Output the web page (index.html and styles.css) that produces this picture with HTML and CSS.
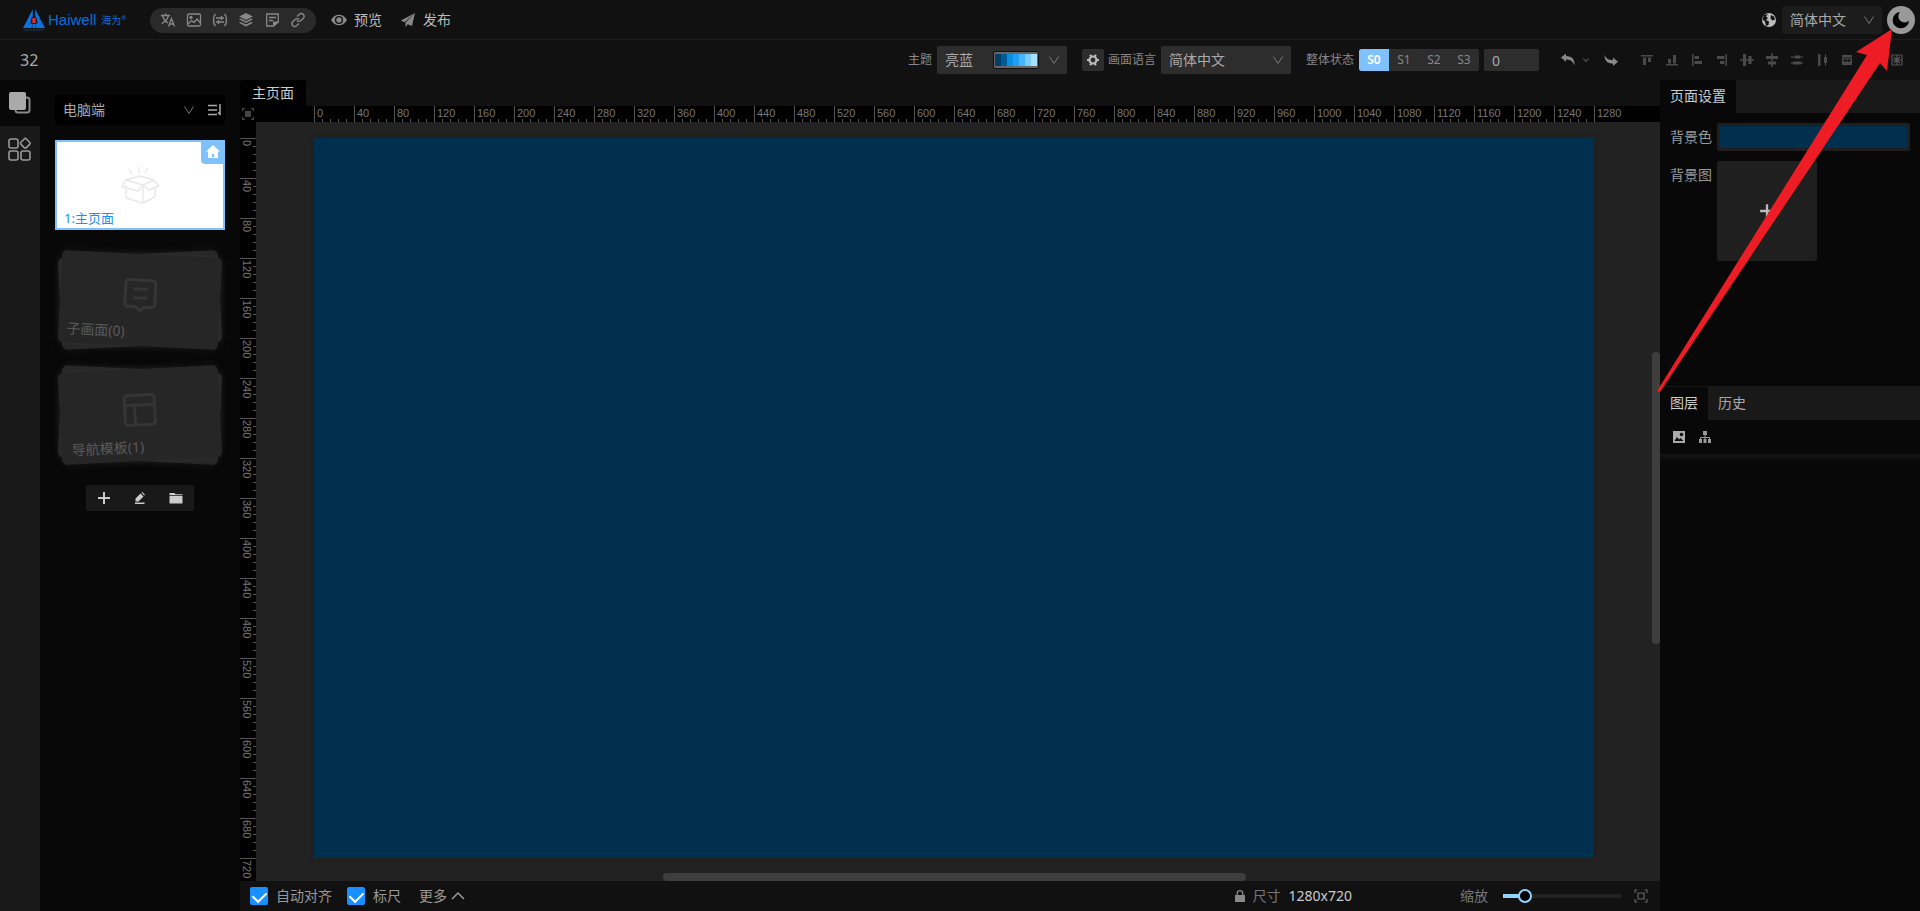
FILE: index.html
```html
<!DOCTYPE html>
<html lang="zh-CN">
<head>
<meta charset="utf-8">
<title>Haiwell 画面编辑器</title>
<link rel="stylesheet" href="styles.css">
</head>
<body>
<svg class="defs" aria-hidden="true">
  <symbol id="chevron" viewBox="0 0 12 12"><path d="M1.500 2.500 6 9.500 10.500 2.500" fill="none" stroke="currentColor"/></symbol>
  <symbol id="plus" viewBox="0 0 14 14"><path d="M7 1v12M1 7h12" stroke="currentColor" stroke-width="2"/></symbol>
</svg>
<div class="app">
  <header class="topbar">
    <a class="logo" href="#" aria-label="Haiwell">
      <svg width="22" height="24" viewBox="0 0 22 24"><path d="M9.800 1 0 20h8.500l1.300-4.500H7.500l1-5.500 1.300-1.500zM12.200 1 22 20h-8.500l-1.300-4.500h2.300l-1-5.500-1.300-1.500zM9 20l1-4h2l1 4z" fill="#0a72de"/><path d="M9.300 10h3.400v5H9.300z" fill="#e02a2f"/><path d="M1 22h20" stroke="#0a6ed8" stroke-width="2" opacity=".2"/></svg>
      <span class="logo-name">Haiwell</span><span class="logo-cn">海为<sup>®</sup></span>
    </a>
    <nav class="pill">
      <button aria-label="翻译"><svg class="i16" viewBox="0 0 16 16"><path d="M1 3.500h9M5.500 1.500v2M2.500 3.500c1 4 3 6 5.500 7.500M8.500 3.500C7.500 7.500 5 10 1.500 11.500M8.500 14.500l3-8 3 8M9.500 12h4" fill="none" stroke="currentColor" stroke-width="1.300"/></svg></button>
      <button aria-label="图片"><svg class="i16" viewBox="0 0 16 16" fill="none" stroke="currentColor" stroke-width="1.300"><rect x="1.500" y="2" width="13" height="12" rx="1.500"/><path d="m2 12 3.500-3.500 2.500 2L11 7l3.500 4"/><circle cx="5" cy="5.500" r="1"/></svg></button>
      <button aria-label="变量"><svg class="i16" viewBox="0 0 16 16" fill="none" stroke="currentColor" stroke-width="1.400"><path d="M3.500 2C1 4 1 12 3.500 14M12.500 2C15 4 15 12 12.500 14M4 6h8M4 10h8M9.500 4v4M6.500 8v4"/></svg></button>
      <button aria-label="图层"><svg class="i16" viewBox="0 0 16 16" fill="currentColor"><path d="m8 1 7 3.500L8 8 1 4.500zM1 7.300 2.800 6.500 8 9.200l5.200-2.700L15 7.300 8 11zM1 10.800 2.800 10 8 12.600l5.200-2.600 1.800.8L8 14.500z"/></svg></button>
      <button aria-label="便签"><svg class="i16" viewBox="0 0 16 16"><path d="M9.500 14H2.700V2h11.600v8zM5 5.500h7M5 8.500h4" fill="none" stroke="currentColor" stroke-width="1.300"/><path d="M9 15V9.500h6z" fill="currentColor"/></svg></button>
      <button aria-label="链接"><svg class="i16" viewBox="0 0 16 16" fill="none" stroke="currentColor" stroke-width="1.400"><path d="m7 4.500 2.500-2.300c2.500-2 6 1 4 3.800L11 8.500c-1.500 1.400-3.300 1-4.200 0M9 11.500l-2.500 2.300c-2.500 2-6-1-4-3.800L5 7.500c1.500-1.400 3.300-1 4.200 0"/></svg></button>
    </nav>
    <button class="action"><svg class="i16" viewBox="0 0 16 16"><path d="M0 8c3.500-7 12.500-7 16 0-3.500 7-12.500 7-16 0z" fill="#888"/><circle cx="8" cy="8" r="3.400" fill="none" stroke="#111" stroke-width="1.400"/></svg>预览</button>
    <button class="action publish"><svg class="i16" viewBox="0 0 16 16" fill="#888"><path d="M15 1 1 8.500l3.500 1.800zM15 1 5.500 10.500V15l2.300-2.800 4.200 1.800z"/></svg>发布</button>
    <div class="top-right">
      <svg class="i16" viewBox="0 0 16 16"><circle cx="8" cy="8" r="7" fill="#bbb"/><path d="M7 2 5 4.500 7 6l-2 2 3 1.500L7.500 13 5 14 4 9.500 1.500 7.500 3 3zM10 3l3 1.500 1 3-2.500 1-2-2z" fill="#111"/></svg>
      <div class="select lang"><select aria-label="语言"><option>简体中文</option></select><svg class="chev"><use href="#chevron"/></svg></div>
      <button class="moon" aria-label="深色主题"><svg viewBox="0 0 28 28"><path d="M13 6a6 6 0 0 0 9 8.500A8.200 8.200 0 1 1 13 6z" fill="#000"/></svg></button>
    </div>
  </header>

  <div class="toolbar">
    <h1 class="project">32</h1>
    <label for="theme">主题</label>
    <div class="select theme"><select id="theme"><option>亮蓝</option></select>
      <span class="swatches"><i class="c1"></i><i class="c2"></i><i class="c3"></i><i class="c4"></i><i class="c5"></i><i class="c6"></i><i class="c7"></i></span>
      <svg class="chev"><use href="#chevron"/></svg></div>
    <button class="gear" aria-label="语言设置"><svg class="i12" viewBox="0 0 12 12"><circle cx="6" cy="6" r="3.500" fill="none" stroke="#bbb" stroke-width="2.200"/><path d="M3 .8 4.500 2.500M9 .8 7.500 2.500M3 11.200 4.500 9.500M9 11.200 7.500 9.500M0 6h2M10 6h2" stroke="#bbb" stroke-width="2"/></svg></button>
    <label class="plang" for="plang">画面语言</label>
    <div class="select"><select id="plang"><option>简体中文</option></select><svg class="chev"><use href="#chevron"/></svg></div>
    <span class="state-label">整体状态</span>
    <div class="seg"><button class="on">S0</button><button>S1</button><button>S2</button><button>S3</button></div>
    <input class="state-input" type="text" value="0" aria-label="状态值">
    <div class="history">
      <button aria-label="撤销"><svg class="i14" viewBox="0 0 14 14" fill="#888"><path d="M0 4.500 5 .5V3c6 0 9 3.500 8.500 9.500C12 8.500 9.500 6.500 5 6.500v2.300z"/></svg></button>
      <button class="more-undo" aria-label="撤销列表"><svg class="i8" viewBox="0 0 12 12"><path d="m2 4 4 4 4-4" fill="none" stroke="#555" stroke-width="1.800"/></svg></button>
      <button aria-label="重做"><svg class="i14" viewBox="0 0 14 14" fill="#888"><path d="M14 8.800 9 13v-2.500C3.500 10.500.5 8 .5 2 2.500 6 4.500 7 9 7V4.500z"/></svg></button>
    </div>
    <div class="aligns">
      <button aria-label="顶对齐"><svg class="i14" viewBox="0 0 14 14"><path d="M1 2h12v1.500H1zM3 4.500h3V12H3zM8 4.500h3V9H8z"/></svg></button>
      <button aria-label="底对齐"><svg class="i14" viewBox="0 0 14 14"><path d="M1 11h12v1.500H1zM3 6h3v4.500H3zM8 2h3v8.500H8z"/></svg></button>
      <button aria-label="左对齐"><svg class="i14" viewBox="0 0 14 14"><path d="M2 1h1.500v12H2zM4.500 3H9v3H4.500zM4.500 8H12v3H4.500z"/></svg></button>
      <button aria-label="右对齐"><svg class="i14" viewBox="0 0 14 14"><path d="M10.500 1H12v12h-1.500zM2 3h7.500v3H2zM5 8h4.500v3H5z"/></svg></button>
      <button aria-label="垂直居中"><svg class="i14" viewBox="0 0 14 14"><path d="M0 6.300h14v1.500H0zM3 1h3v12H3zM8.500 3h3v8h-3z"/></svg></button>
      <button aria-label="水平居中"><svg class="i14" viewBox="0 0 14 14"><path d="M6.300 0h1.500v14H6.300zM1 3h12v3H1zM3 8.500h8v3H3z"/></svg></button>
      <button aria-label="垂直等距"><svg class="i14" viewBox="0 0 14 14"><path d="M1 3.500h12v1.200H1zM5 2.500h5v3H5zM1 9.500h12v1.200H1zM3 8.500h8v3H3z"/></svg></button>
      <button aria-label="水平等距"><svg class="i14" viewBox="0 0 14 14"><path d="M3 1h2.500v12H3zM10 1h1v12h-1zM9 4h3v6H9z"/></svg></button>
      <button aria-label="等宽"><svg class="i14" viewBox="0 0 14 14"><path fill-rule="evenodd" d="M2 2h10v10H2zM2 4.500v.8h10v-.8zM5.500 5.500 3 7.500l2.500 2v-1.300h3v1.300l2.500-2-2.500-2v1.300h-3z"/></svg></button>
      <button aria-label="等高"><svg class="i14" viewBox="0 0 14 14"><path fill-rule="evenodd" d="M2 2h10v10H2zM7 3.500 5 6h1.300v2H5l2 2.500L9 8H7.700V6H9z"/></svg></button>
      <button aria-label="等大小"><svg class="i14" viewBox="0 0 14 14"><path d="M2 2h10v10H2zM7 2v10M2 7h10M4 4l6 6M10 4l-6 6" fill="none" stroke="#555" stroke-width="1.200"/></svg></button>
    </div>
  </div>

  <main class="body">
    <nav class="rail">
      <button class="on" aria-label="画面"><svg width="22" height="22" viewBox="0 0 22 22"><rect x="6.500" y="5.500" width="14" height="15" rx="2.500" fill="none" stroke="#888" stroke-width="2"/><rect width="17" height="18" rx="2" fill="#aaa"/></svg></button>
      <button aria-label="组件"><svg width="24" height="24" viewBox="0 0 24 24" fill="none" stroke="#999" stroke-width="1.600"><rect x="1" y="2" width="9" height="9" rx="2"/><rect x="1" y="14" width="9" height="9" rx="2"/><rect x="13" y="14" width="9" height="9" rx="2"/><rect x="13.500" y="2.500" width="7.600" height="7.600" rx="1.500" transform="rotate(45 17.300 6.300)"/></svg></button>
    </nav>

    <aside class="pages">
      <div class="device">
        <div class="select"><select aria-label="终端"><option>电脑端</option></select><svg class="chev"><use href="#chevron"/></svg></div>
        <button aria-label="排序"><svg class="i14" viewBox="0 0 14 14"><path d="M0 2.500h9M0 7h9M0 11.500h9M12 1v10.500M12.500 12 10 9.500" fill="none" stroke="#aaa" stroke-width="1.500"/></svg></button>
      </div>
      <a class="page-card" href="#">
        <svg width="38" height="38" viewBox="0 0 38 38" fill="none" stroke="#e8e8e8" stroke-width="1.400" stroke-linejoin="round"><path d="M5 19v13l17 5 12-6V20M22 19v18M5 14l14-4 14 4-11 5zM5 14l-4 7 16 4 5-6 6 5 10-4-5-6M18 1v6M8 3l3 5M27 2l-3 5"/></svg>
        <span class="page-name">1:主页面</span>
        <span class="home"><svg class="i14" viewBox="0 0 14 14" fill="#fff"><path d="M7 0 0 6.500h2V13h10V6.500h2zM6 9h2v3H6z" fill-rule="evenodd"/></svg></span>
      </a>
      <a class="stack" href="#">
        <span class="sheet tilt-l"></span>
        <span class="sheet tilt-r"><svg width="34" height="34" viewBox="0 0 34 34" fill="none" stroke="#353535" stroke-width="3"><path d="M5 2h24a3 3 0 0 1 3 3v21a3 3 0 0 1-3 3h-8l-4 4-4-4H5a3 3 0 0 1-3-3V5a3 3 0 0 1 3-3zM10 11h14M10 20h14"/></svg><span class="sheet-name">子画面(0)</span></span>
      </a>
      <a class="stack" href="#">
        <span class="sheet tilt-r"></span>
        <span class="sheet tilt-l"><svg width="34" height="34" viewBox="0 0 34 34" fill="none" stroke="#353535" stroke-width="3"><rect x="2" y="2" width="30" height="30" rx="3"/><path d="M2 12h30M12 12v20"/></svg><span class="sheet-name inset">导航模板(1)</span></span>
      </a>
      <div class="page-tools">
        <button aria-label="新增"><svg class="i14"><use href="#plus"/></svg></button>
        <button aria-label="编辑"><svg class="i12" viewBox="0 0 12 12" fill="currentColor"><path d="m1.500 6.500 5-5 3 3-5 5h-3zM7.500.8 8.300 0l2.700 2.700-.8.900zM1 10.500h9.500V12H1z"/></svg></button>
        <button aria-label="文件夹"><svg class="i14" viewBox="0 0 14 14" fill="currentColor"><path d="M.5 2h5l1 1.200h7v1H.5zM.5 5h13v7.500H.5z"/></svg></button>
      </div>
    </aside>

    <section class="editor">
      <div class="tabs"><button class="doc-tab">主页面</button></div>
      <div class="stage">
        <button class="corner" aria-label="适应"><svg class="i12" viewBox="0 0 12 12"><path d="M3 3h6v6H3z" fill="#444"/><path d="M.5 3V.5H3M9 .5h2.500V3M11.500 9v2.500H9M3 11.500H.5V9" fill="none" stroke="#444" stroke-width="1.500"/></svg></button>
        <ol class="ruler across"><li>0</li><li>40</li><li>80</li><li>120</li><li>160</li><li>200</li><li>240</li><li>280</li><li>320</li><li>360</li><li>400</li><li>440</li><li>480</li><li>520</li><li>560</li><li>600</li><li>640</li><li>680</li><li>720</li><li>760</li><li>800</li><li>840</li><li>880</li><li>920</li><li>960</li><li>1000</li><li>1040</li><li>1080</li><li>1120</li><li>1160</li><li>1200</li><li>1240</li><li>1280</li></ol>
        <ol class="ruler down"><li>0</li><li>40</li><li>80</li><li>120</li><li>160</li><li>200</li><li>240</li><li>280</li><li>320</li><li>360</li><li>400</li><li>440</li><li>480</li><li>520</li><li>560</li><li>600</li><li>640</li><li>680</li><li>720</li></ol>
        <div class="viewport">
          <div class="artboard"></div>
          <span class="thumb v"></span><span class="thumb h"></span>
        </div>
      </div>
      <footer class="status">
        <label><input type="checkbox" checked>自动对齐</label>
        <label><input type="checkbox" checked>标尺</label>
        <button class="more">更多<svg class="i14" viewBox="0 0 14 14"><path d="m1 10 6-6 6 6" fill="none" stroke="#999" stroke-width="1.500"/></svg></button>
        <span class="size"><svg width="10" height="12" viewBox="0 0 10 12"><path d="M0 5h10v7H0z" fill="#888"/><path d="M2.200 5V3.500a2.800 2.800 0 0 1 5.600 0V5" fill="none" stroke="#888" stroke-width="1.300"/></svg><span class="dim">尺寸</span><b>1280x720</b></span>
        <label class="zoom" for="zoom">缩放</label>
        <input id="zoom" type="range" min="0" max="100" value="14">
        <button class="fit" aria-label="适应窗口"><svg class="i14" viewBox="0 0 14 14" fill="none" stroke="#666" stroke-width="1.200"><path d="M4 4h6v6H4zM1 4V1h2.500M10.500 1H13v3M13 10v3h-2.500M3.500 13H1v-3"/></svg></button>
      </footer>
    </section>

    <aside class="props">
      <section class="panel">
        <div class="panel-tabs"><button class="on">页面设置</button></div>
        <div class="form">
          <label for="bgcolor">背景色</label><input id="bgcolor" type="color" value="#00304d">
          <span class="form-label">背景图</span><button class="upload" aria-label="上传背景图"><svg class="i16"><use href="#plus"/></svg></button>
        </div>
      </section>
      <section class="panel lower">
        <div class="panel-tabs"><button class="on">图层</button><button>历史</button></div>
        <div class="layer-tools">
          <button aria-label="图片"><svg class="i12" viewBox="0 0 12 12"><path d="M0 0h12v12H0z" fill="#aaa"/><circle cx="8.500" cy="3.500" r="1.700" fill="#080808"/><path d="m1.500 10 2.500-4 2 2.500L7.500 7l3 3z" fill="#080808"/></svg></button>
          <button aria-label="结构"><svg class="i12" viewBox="0 0 12 12" fill="#999"><path d="M4 0h4v4H4zM0 8h3v4H0zM4.500 8h3v4h-3zM9 8h3v4H9z"/><path d="M6 4v4M1.500 8V6.500h9V8" fill="none" stroke="#999"/></svg></button>
        </div>
        <div class="layer-list"></div>
      </section>
    </aside>
  </main>

  <svg class="pointer" width="240" height="366" viewBox="0 0 240 366" aria-hidden="true"><path d="M234 3 229 45 222 37 2 366-1 365 209 29 198 26z" fill="#ee1c24"/></svg>
</div>
</body>
</html>
```
FILE: styles.css
```css
* { box-sizing: border-box; }
body {
  margin: 0;
  background: #111;
  color: #aaa;
  font: 14px/20px "Noto Sans", "Noto Sans CJK SC", sans-serif;
}
button, input, select { font: inherit; color: inherit; margin: 0; }
button { border: 0; padding: 0; background: none; display: flex; align-items: center; justify-content: center; }
a { color: inherit; text-decoration: none; }
svg { flex: none; display: block; }
.defs { position: absolute; width: 0; height: 0; }
.i8 { width: 8px; height: 8px; }
.i12 { width: 12px; height: 12px; }
.i14 { width: 14px; height: 14px; }
.i16 { width: 16px; height: 16px; }
.app { position: relative; height: 100vh; display: flex; flex-direction: column; overflow: hidden; }

/* selects */
.select { position: relative; width: 130px; height: 28px; }
.select select {
  width: 100%; height: 100%; padding: 0 8px; border: 0; border-radius: 2px;
  appearance: none; background: #2d2d2d; color: #aaa;
}
.chev { position: absolute; right: 7px; top: 8px; width: 12px; height: 12px; color: #777; pointer-events: none; }

/* top bar */
.topbar { height: 40px; flex: none; display: flex; align-items: center; padding: 1px 5px 0 23px; border-bottom: 1px solid #1c1c1c; }
.logo { display: flex; align-items: center; width: 127px; color: #0a6ed8; }
.logo-name { font: 15px/20px "Liberation Sans", sans-serif; margin-left: 3px; }
.logo-cn { font-size: 10px; margin-left: 5px; white-space: nowrap; }
.logo-cn sup { font-size: 6px; line-height: 0; }
.pill { display: flex; gap: 10px; padding: 0 10px; height: 25px; border-radius: 13px; background: #2a2a2a; color: #888; }
.action { gap: 7px; margin-left: 15px; color: #bbb; }
.publish { margin-left: 18px; }
.top-right { margin-left: auto; display: flex; align-items: center; gap: 5px; }
.lang { width: 100px; }
.lang select { background: #1c1c1c; }
.moon { width: 28px; height: 28px; border-radius: 50%; background: #999; }
.moon svg { width: 28px; height: 28px; }

/* toolbar */
.toolbar { height: 40px; flex: none; display: flex; align-items: center; padding: 0 16px 0 20px; font-size: 12px; color: #888; }
.project { margin: 0 auto 0 0; font-size: 16px; font-weight: 400; line-height: 20px; color: #aaa; }
.toolbar .select { margin: 0 15px 0 5px; font-size: 14px; }
.swatches { position: absolute; left: 56px; top: 5px; display: flex; padding: 1px; border: 1px solid #111; border-radius: 2px; background: #666; pointer-events: none; }
.swatches i { width: 6px; height: 14px; border: solid #666; border-width: 1px 0; }
.c1 { background: #00406b; } .c2 { background: #005a96; } .c3 { background: #0a8fe0; } .c4 { background: #1fa0f5; }
.c5 { background: #47b4fc; } .c6 { background: #7accff; } .c7 { background: #a8e0ff; }
.gear { width: 22px; height: 22px; margin-right: 4px; border-radius: 2px; background: #2d2d2d; }
.seg { display: flex; margin: 0 5px; border-radius: 2px; background: #2d2d2d; overflow: hidden; }
.seg button { width: 30px; height: 22px; }
.seg .on { background: #7fc1ff; color: #fff; font-weight: 600; border-radius: 2px 0 0 2px; }
.state-input { width: 55px; height: 22px; padding: 0 8px; border: 0; border-radius: 2px; background: #2d2d2d; font-size: 14px; color: #aaa; }
.history { display: flex; align-items: center; margin: 0 22px; }
.more-undo { margin: 0 14px 0 7px; }
.aligns { display: flex; gap: 11px; fill: #4a4a4a; }

/* body */
.body { flex: 1; min-height: 0; display: grid; grid-template: minmax(0, 1fr) / 40px 200px minmax(0, 1fr) 260px; }
.rail { background: #191919; }
.rail button { width: 100%; height: 46px; }
.rail .on { background: #080808; }

.pages { display: flex; flex-direction: column; gap: 25px; padding: 15px; background: #080808; }
.device { display: flex; align-items: center; height: 30px; margin-bottom: -10px; background: #000; border-radius: 2px; }
.device .select { width: 153px; }
.device .select select { background: none; }
.device .select .chev { right: 13px; }
.page-card { position: relative; height: 90px; display: flex; align-items: center; justify-content: center; border: 2px solid #7fc1ff; background: #fff; }
.page-name { position: absolute; left: 7px; bottom: 1px; color: #1890ff; font-size: 13px; line-height: 18px; }
.home { position: absolute; right: -2px; top: -2px; width: 24px; height: 24px; display: flex; align-items: center; justify-content: center; background: #7fc1ff; border-radius: 0 0 0 4px; }
.stack { display: grid; height: 90px; padding: 0 5px; }
.sheet { grid-area: 1 / 1; position: relative; display: flex; align-items: center; justify-content: center; margin: -1px 0; padding-bottom: 10px; border-radius: 5px; background: #262626; box-shadow: 0 0 10px rgba(120, 120, 120, .15); }
.tilt-l { transform: rotate(-3deg); }
.tilt-r { transform: rotate(3deg); }
.sheet-name { position: absolute; left: 8px; bottom: 4px; color: #5a5a5a; line-height: 20px; }
.sheet-name.inset { left: 10px; }
.page-tools { display: flex; align-self: center; background: #191919; border-radius: 2px; color: #ccc; }
.page-tools button { width: 36px; height: 26px; }

/* editor */
.editor { display: flex; flex-direction: column; min-width: 0; background: #111; }
.tabs { display: flex; height: 26px; flex: none; }
.doc-tab { padding: 0 12px; background: #000; color: #ccc; border-radius: 3px 3px 0 0; }
.stage { flex: 1; min-height: 0; display: grid; grid-template: 16px minmax(0, 1fr) / 16px minmax(0, 1fr); background: #000; }
.ruler { list-style: none; margin: 0; padding: 0; display: flex; overflow: hidden; font: 11px/14px "Liberation Sans", sans-serif; color: #777; }
.ruler li { flex: none; }
.across { padding-left: 58px; }
.across li { width: 40px; padding-left: 2px; border-left: 1px solid #555; background: repeating-linear-gradient(90deg, transparent 0 7px, #555 7px 8px) 0 100% / 100% 3px no-repeat; }
.down { flex-direction: column; padding-top: 16px; }
.down li { height: 40px; width: 16px; padding: 1px 2px 0 0; border-top: 1px solid #555; writing-mode: vertical-rl; line-height: 14px; background: repeating-linear-gradient(180deg, transparent 0 7px, #555 7px 8px) 100% 0 / 3px 100% no-repeat; }
.ruler li:last-child { background: none; }
.down li:last-child { height: 23px; }
.viewport { position: relative; overflow: hidden; padding: 16px 58px; background: #222; }
.artboard { width: 1280px; height: 720px; background: #00304d; box-shadow: 0 0 10px rgba(0, 0, 0, .15); }
.thumb { position: absolute; border-radius: 4px; background: #3e3e3e; }
.thumb.v { right: 0; top: 30.3%; width: 8px; height: 38.5%; }
.thumb.h { bottom: 0; left: 29%; width: 41.5%; height: 8px; }

.status { height: 30px; flex: none; display: flex; align-items: center; padding: 0 12px 0 10px; color: #999; }
.status label { display: flex; align-items: center; gap: 8px; margin-right: 15px; }
.status input[type="checkbox"] { appearance: none; width: 18px; height: 18px; border-radius: 2px; background: #1890ff; display: flex; justify-content: center; padding-top: 2px; }
.status input[type="checkbox"]::after { content: ""; width: 7px; height: 11px; border: solid #fff; border-width: 0 2px 2px 0; transform: rotate(45deg); }
.more { gap: 4px; margin-left: 3px; }
.size { display: flex; align-items: center; margin-left: auto; }
.dim { margin: 0 8px; color: #777; }
.size b { font-weight: 400; color: #ccc; }
.status .zoom { margin: 0 15px 0 108px; color: #777; }
#zoom { appearance: none; width: 118px; height: 14px; background: linear-gradient(90deg, #91d5ff 18px, #222 18px) center / 100% 4px no-repeat; border-radius: 2px; }
#zoom::-webkit-slider-thumb { appearance: none; width: 14px; height: 14px; border: 2px solid #91d5ff; border-radius: 50%; background: #000; }
.fit { margin-left: 13px; }

/* right panels */
.props { display: grid; grid-template-rows: 7fr 12fr; background: #080808; }
.panel-tabs { display: flex; height: 33px; background: #191919; color: #aaa; }
.panel-tabs button { padding: 0 10px 2px; }
.panel-tabs .on { background: #080808; color: #ccc; }
.form { display: grid; grid-template-columns: 42px minmax(0, 1fr); gap: 10px 5px; padding: 10px; line-height: 28px; color: #999; }
.form input { appearance: none; width: 100%; height: 28px; padding: 3px; border: 0; border-radius: 2px; background: #1f1f1f; }
.form input::-webkit-color-swatch-wrapper { padding: 0; }
.form input::-webkit-color-swatch { border: 0; border-radius: 2px; }
.upload { width: 100px; height: 100px; border-radius: 2px; background: #1f1f1f; color: #bbb; }
.lower { border-top: 1px solid #191919; }
.layer-tools { display: flex; align-items: center; gap: 14px; height: 34px; padding: 0 13px; }
.layer-list { height: 8px; background: linear-gradient(#151515, #080808); }

.pointer { position: absolute; right: 22px; top: 26px; overflow: visible; pointer-events: none; }
```
